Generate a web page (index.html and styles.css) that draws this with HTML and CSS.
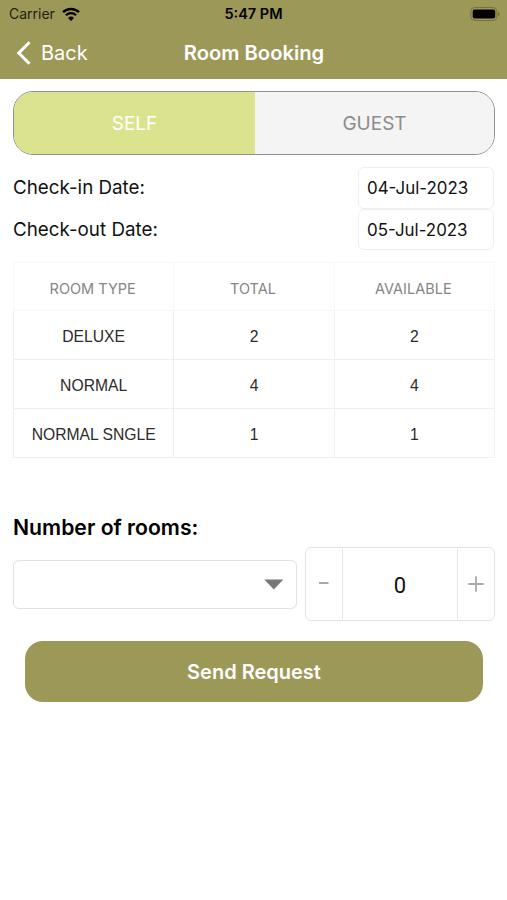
FILE: index.html
```html
<!DOCTYPE html>
<html lang="en">
<head>
  <meta charset="UTF-8">
  <title>Room Booking</title>
  <link rel="stylesheet" href="styles.css">
</head>
<body>

<header class="header">
  <div class="status-bar">
    <div class="carrier">
      <span>Carrier</span>
      <svg width="18" height="14" viewBox="0 0 18 14">
        <path d="M1 5.2a11.5 11.5 0 0 1 16 0" fill="none" stroke="#000" stroke-width="2.5"/>
        <path d="M3.9 8.3a7.3 7.3 0 0 1 10.2 0" fill="none" stroke="#000" stroke-width="2.3"/>
        <path d="M9 14L6 11a4.3 4.3 0 0 1 6 0z" fill="#000"/>
      </svg>
    </div>
    <span class="time">5:47 PM</span>
    <svg class="battery" width="31" height="14" viewBox="0 0 31 14">
      <rect x="0.9" y="0.5" width="26" height="13" rx="4" fill="none" stroke="#74713f"/>
      <rect x="2.7" y="2.4" width="22.5" height="9.2" rx="2" fill="#000"/>
      <path d="M28.3 4.8a2.5 2.5 0 0 1 0 4.4z" fill="#67653a"/>
    </svg>
  </div>
  <div class="nav-bar">
    <a class="back">
      <svg width="15" height="24" viewBox="0 0 15 24">
        <path d="M13.5 1.2L2.8 12L13.5 22.8" fill="none" stroke="#fff" stroke-width="3"/>
      </svg>
      <span>Back</span>
    </a>
    <h1 class="title">Room Booking</h1>
  </div>
</header>

<main class="content">

  <div class="tabs">
    <div class="tab active">SELF</div>
    <div class="tab">GUEST</div>
  </div>

  <!-- Dates -->
  <div class="date-row first">
    <span class="date-label">Check-in Date:</span>
    <div class="date-box">04-Jul-2023</div>
  </div>
  <div class="date-row">
    <span class="date-label">Check-out Date:</span>
    <div class="date-box">05-Jul-2023</div>
  </div>

  <!-- Rooms table -->
  <table class="rooms">
    <thead>
      <tr>
        <th>ROOM TYPE</th>
        <th>TOTAL</th>
        <th>AVAILABLE</th>
      </tr>
    </thead>
    <tbody>
      <tr>
        <td>DELUXE</td>
        <td>2</td>
        <td>2</td>
      </tr>
      <tr>
        <td>NORMAL</td>
        <td>4</td>
        <td>4</td>
      </tr>
      <tr>
        <td>NORMAL SNGLE</td>
        <td>1</td>
        <td>1</td>
      </tr>
    </tbody>
  </table>

  <h2 class="rooms-title">Number of rooms:</h2>

  <div class="rooms-row">
    <div class="select">
      <svg width="20" height="11" viewBox="0 0 20 11">
        <path d="M0.3 0.5H19.3L9.8 10.4z" fill="#777"/>
      </svg>
    </div>
    <div class="stepper">
      <div class="step">
        <svg width="16" height="16" viewBox="0 0 16 16">
          <path d="M3 7H12.5" stroke="#a9a9a9" stroke-width="2"/>
        </svg>
      </div>
      <div class="count">0</div>
      <div class="step">
        <svg width="16" height="16" viewBox="0 0 16 16">
          <path d="M0.3 8H15.7M8 0.3V15.7" stroke="#a9a9a9" stroke-width="1.8"/>
        </svg>
      </div>
    </div>
  </div>

  <div class="send">Send Request</div>

</main>

</body>
</html>
```
FILE: styles.css
```css
* {
  box-sizing: border-box;
}
body {
  margin: 0;
  background: #fff;
  color: #111;
  font-family: Inter, "Liberation Sans", sans-serif;
}
svg {
  display: block;
}
.header {
  height: 79px;
  background: #9c9858;
}
.status-bar {
  display: grid;
  grid-template-columns: 1fr auto 1fr;
  align-items: center;
  height: 27px;
  padding: 0 6px 0 9px;
  color: #000;
  font-size: 14px;
}
.carrier {
  display: flex;
  align-items: center;
  gap: 7px;
  color: #1f1e10;
}
.time {
  padding-right: 3px;
  font-size: 14.5px;
  font-weight: 600;
}
.battery {
  justify-self: end;
}
.nav-bar {
  display: grid;
  grid-template-columns: 1fr auto 1fr;
  align-items: center;
  height: 51px;
  padding: 0 15px 0 16px;
  color: #fff;
}
.back {
  display: flex;
  align-items: center;
  gap: 10px;
  font-size: 20px;
}
.title {
  margin: 0;
  font-size: 20.2px;
  font-weight: 600;
}
.content {
  padding: 12px 12px 0 13px;
}
.tabs {
  display: flex;
  height: 64px;
  border: 1.5px solid #8f8f8f;
  border-radius: 20px;
  overflow: hidden;
}
.tab {
  flex: 1;
  display: flex;
  align-items: center;
  justify-content: center;
  background: #f4f4f4;
  color: #8b8b8b;
  font-size: 19px;
}
.tab.active {
  flex: 0 0 241px;
  background: #dbe38f;
  color: #fff;
}
.date-row {
  display: flex;
  justify-content: space-between;
  align-items: center;
  padding-right: 1px;
}
.date-row.first {
  margin-top: 12px;
}
.date-label {
  font-size: 18.8px;
}
.date-box {
  display: flex;
  align-items: center;
  width: 136px;
  height: 41.5px;
  padding: 1px 0 0 8px;
  border: 1px solid #efefef;
  border-radius: 6px;
  font-size: 16.9px;
}
.rooms {
  width: 100%;
  margin-top: 12px;
  border-collapse: collapse;
  table-layout: fixed;
  text-align: center;
}
.rooms th {
  height: 48px;
  padding: 4px 2px 0 0;
  border: 1px solid #f8f8f8;
  color: #858585;
  font-size: 14.5px;
  font-weight: 400;
}
.rooms td {
  height: 49px;
  padding: 4px 0 0;
  border: 1px solid #efefef;
  color: #2b2b2b;
  font-family: "Liberation Sans", Arial, sans-serif;
  font-size: 15.7px;
}
.rooms tbody tr:first-child td {
  border-top-color: #fcfcfc;
}
.rooms-title {
  margin: 55px 0 0;
  color: #000;
  font-size: 21.2px;
  font-weight: 600;
  line-height: 28px;
}
.rooms-row {
  display: flex;
  align-items: center;
  gap: 8px;
  margin-top: 6px;
}
.select {
  flex: 1;
  display: flex;
  align-items: center;
  justify-content: flex-end;
  height: 49px;
  padding-right: 12px;
  border: 1.5px solid #e2e2e2;
  border-radius: 6px;
}
.stepper {
  display: flex;
  width: 190px;
  height: 74px;
  border: 1px solid #e2e2e2;
  border-radius: 6px;
}
.step {
  display: flex;
  align-items: center;
  justify-content: center;
  width: 36px;
}
.count {
  flex: 1;
  display: flex;
  align-items: center;
  justify-content: center;
  padding-top: 2px;
  border: 1px solid #e8e8e8;
  border-width: 0 1px;
  font-family: Roboto, sans-serif;
  font-size: 22px;
}
.send {
  display: flex;
  align-items: center;
  justify-content: center;
  height: 61px;
  margin: 20px 12px 0;
  border-radius: 18px;
  background: #9c9858;
  color: #fff;
  font-size: 20px;
  font-weight: 600;
}
```
